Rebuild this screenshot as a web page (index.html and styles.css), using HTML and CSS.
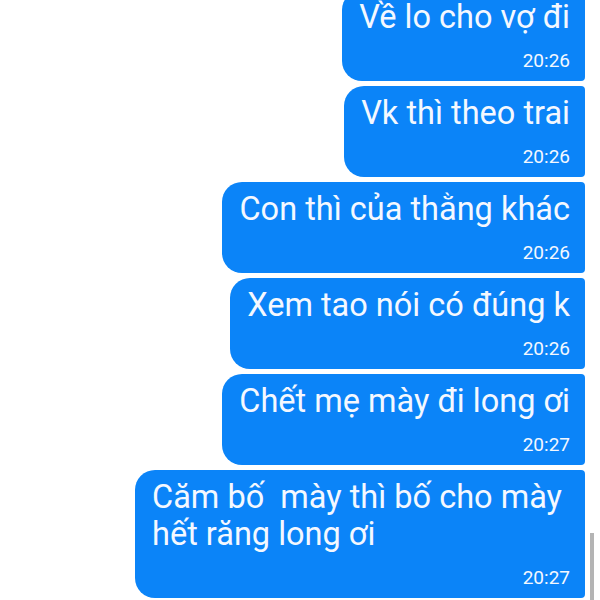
FILE: index.html
```html
<!doctype html>
<html>
	<head>
		<title>chat</title>
		<meta charset="utf-8">
		<link rel="stylesheet" href="styles.css">
	</head>
	<body>
		<div class="thread">
			<div class="msg"><p class="txt">Về lo cho vợ đi</p><div class="time">20:26</div></div>
			<div class="msg"><p class="txt">Vk thì theo trai</p><div class="time">20:26</div></div>
			<div class="msg"><p class="txt">Con thì của thằng khác</p><div class="time">20:26</div></div>
			<div class="msg"><p class="txt">Xem tao nói có đúng k</p><div class="time">20:26</div></div>
			<div class="msg"><p class="txt">Chết mẹ mày đi long ơi</p><div class="time">20:27</div></div>
			<div class="msg"><p class="txt">Căm bố&nbsp; mày thì bố cho mày hết răng long ơi</p><div class="time">20:27</div></div>
		</div>
		<div class="scroll"></div>
	</body>
</html>
```

FILE: styles.css
```css
body{
	margin:0px;
	padding:0px;
	background:#fff;
	font-family:Roboto, "Noto Sans", sans-serif;
	overflow:hidden;
}

.thread{
	display:flex;
	flex-direction:column;
	align-items:flex-end;
	gap:5px;
	margin-top:-10px;
	padding-right:15px;
}

.msg{
	max-width:450px;
	box-sizing:border-box;
	padding:9px 15px 9px 17px;
	background:#0b84f8;
	color:#f4f8ff;
	border-radius:20px 4px 4px 20px;
}

.txt{
	margin:0px;
	font-size:32.5px;
	line-height:37px;
}

.time{
	margin-top:14px;
	font-size:19px;
	line-height:22px;
	text-align:right;
}

/** thanh cuộn bên phải **/
.scroll{
	position:absolute;
	right:6px;
	top:533px;
	width:4px;
	height:67px;
	background:#b4b4b4;
}
```
